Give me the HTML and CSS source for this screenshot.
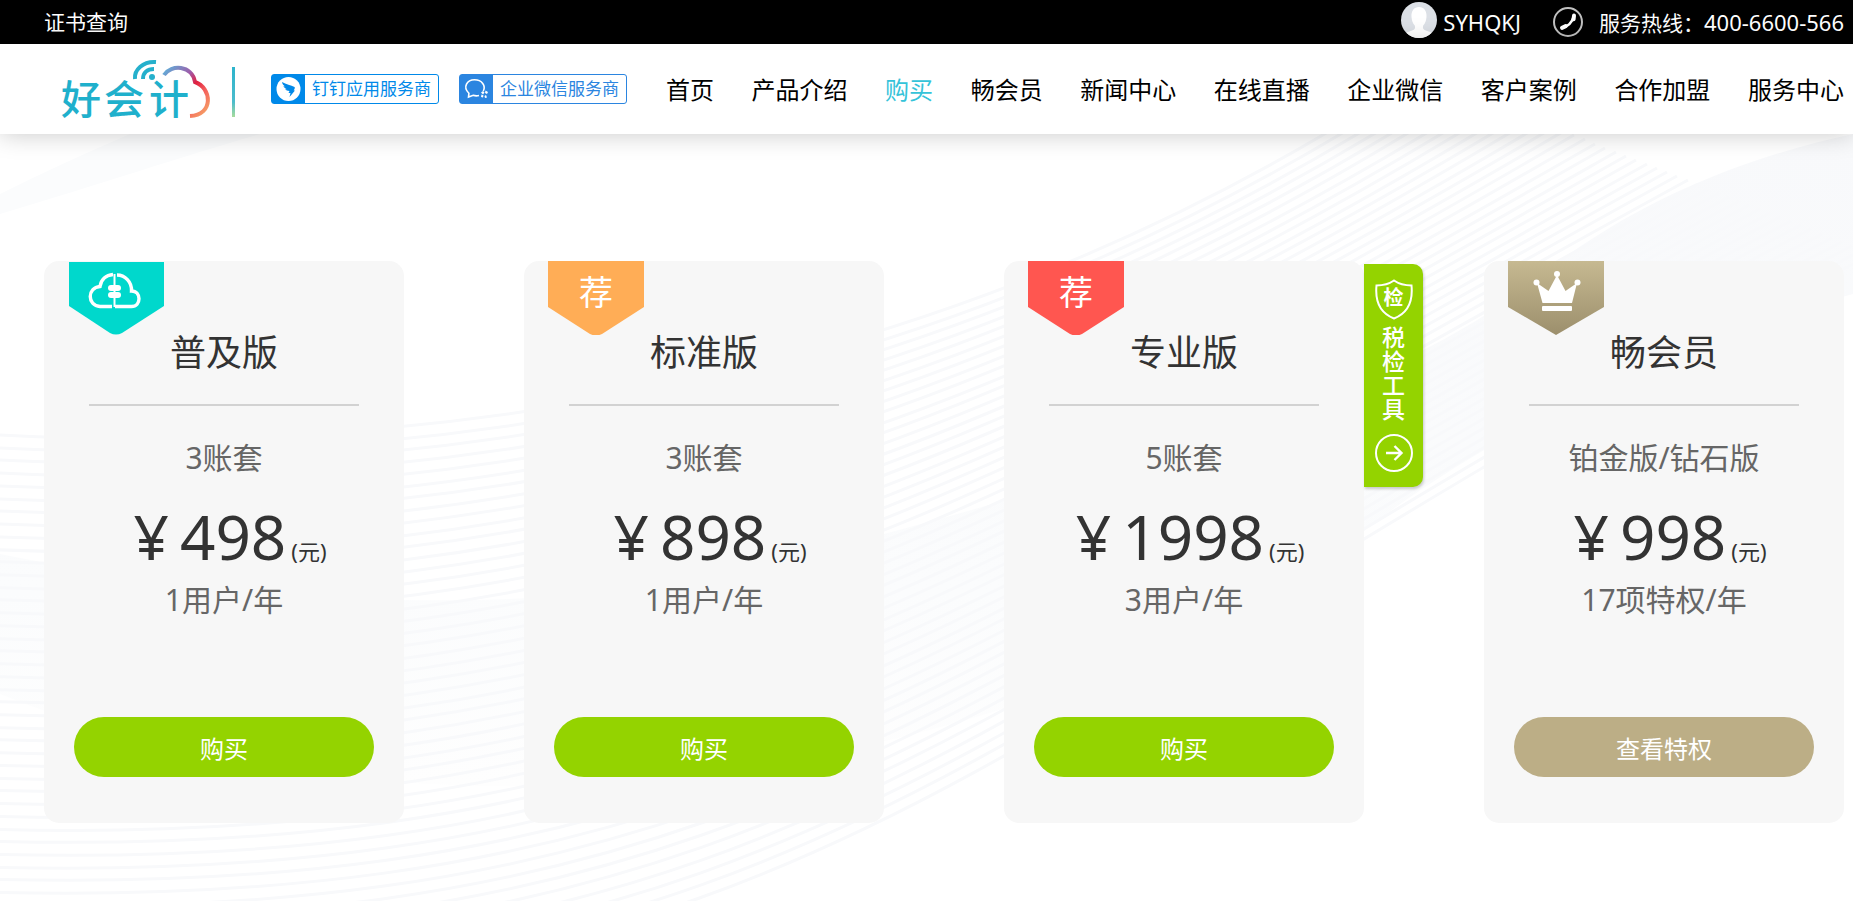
FILE: index.html
```html
<!DOCTYPE html>
<html lang="zh-CN">
<head>
<meta charset="utf-8">
<title>好会计</title>
<link rel="stylesheet" href="styles.css">
</head>
<body>
<div class="topbar">
  <a class="topbar-link" href="#">证书查询</a>
  <div class="topbar-right">
    <a class="user" href="#">
      <svg class="avatar" viewBox="0 0 36 36" aria-hidden="true">
        <defs><clipPath id="round"><circle cx="18" cy="18" r="18"/></clipPath></defs>
        <g clip-path="url(#round)">
          <rect width="36" height="36" fill="#dce0e6"/>
          <path fill="#fff" d="M18 5c5 0 8 4 7.500 10-.3 4-1.500 6.500-3.300 8.500-.9 3 .3 4.500 3.300 5.300 3 .8 5 1.700 6.500 3.200V36H4v-4c1.500-1.500 3.500-2.400 6.500-3.200s4.200-2.300 3.300-5.300c-1.800-2-3-4.500-3.300-8.500C10 9 13 5 18 5z"/>
        </g>
      </svg>
      <span class="latin">SYHQKJ</span>
    </a>
    <div class="hotline">
      <svg class="phone" viewBox="0 0 30 30" fill="none" stroke="#fff" aria-hidden="true">
        <circle cx="15" cy="15" r="14" stroke="#c0c0c0" stroke-width="2"/>
        <path d="M9.500 20.500c5-.6 9.600-4.800 11.200-10.800" stroke-width="2.600"/>
        <path d="M9 20.800l3.600-1.600M20.600 12.200l.4-3.600" stroke-width="4" stroke-linecap="round"/>
      </svg>
      <span>服务热线：<span class="latin">400-6600-566</span></span>
    </div>
  </div>
</div>

<header class="header">
  <a class="logo" href="#">
    <svg viewBox="0 -8 176 76" role="img" aria-label="好会计">
      <defs>
        <linearGradient id="cloud" x1="0" y1="0" x2="1" y2="1">
          <stop offset="0" stop-color="#5cb4dc"/><stop offset=".35" stop-color="#a05aa8"/>
          <stop offset=".52" stop-color="#e02040"/><stop offset=".7" stop-color="#f4605c"/><stop offset="1" stop-color="#f6ac68"/>
        </linearGradient>
        <linearGradient id="rule" x1="0" y1="0" x2="0" y2="1">
          <stop offset="0" stop-color="#2cb4cc"/><stop offset=".7" stop-color="#4cbccc"/><stop offset="1" stop-color="#a8dc9c"/>
        </linearGradient>
      </defs>
      <g class="logo-text">
        <text x="0" y="55">好</text><text x="43" y="55">会</text><text x="88" y="55">计</text>
      </g>
      <g fill="none" stroke="#25b0cc" stroke-width="4">
        <path d="M74 20C73 11 82 2 95 3"/><path d="M82 20c0-6 4-10 11-10"/>
      </g>
      <circle cx="91" cy="18" r="3" fill="#25b0cc"/>
      <path d="M103 16c7-11 28-10 31 7 17 6 19 33-5 34" fill="none" stroke="url(#cloud)" stroke-width="4"/>
      <rect x="171" y="8" width="3" height="50" fill="url(#rule)"/>
    </svg>
  </a>
  <div class="partners">
    <a class="partner" href="#">
      <svg viewBox="0 0 32 28" aria-hidden="true"><circle cx="16" cy="14" r="12" fill="#fff"/><path fill="#0089e9" d="M9.500 7c4 2.500 9 3 12.500 5 .8.600 0 2.200-.8 3.500h1.300L17 22l1-4h-2l1-2c-2 0-3.700-.8-4.300-2l2.300.3c-2.400-.8-3.800-2-4-3.300l2 .5C11 10.500 9.800 9 9.500 7z"/></svg>
      <span>钉钉应用服务商</span>
    </a>
    <a class="partner partner-wecom" href="#">
      <svg viewBox="0 0 32 28" fill="none" stroke="#fff" stroke-width="1.600" aria-hidden="true"><path d="M18.500 20.500c-2 .5-4 .4-5.800-.2L8 22l.4-3.700C2 12 6.500 4.800 14 4.800c7.500 0 11.500 6 8.800 11.200"/><path fill="#fff" stroke="none" d="M20.500 17.500l2-1.500 1.500 1.500-1.500 2zM25 15.500l2.500 1.500-1 2-2-1zM24 21l1.500-1 1 2.500-2 .5zM21 19.500l2 1-.5 2-2-.5z"/></svg>
      <span>企业微信服务商</span>
    </a>
  </div>
  <nav class="nav">
    <a href="#">首页</a>
    <a href="#">产品介绍</a>
    <a class="active" href="#">购买</a>
    <a href="#">畅会员</a>
    <a href="#">新闻中心</a>
    <a href="#">在线直播</a>
    <a href="#">企业微信</a>
    <a href="#">客户案例</a>
    <a href="#">合作加盟</a>
    <a href="#">服务中心</a>
  </nav>
</header>

<main class="plans-area">
  <svg class="waves" viewBox="0 0 1853 767" preserveAspectRatio="none" aria-hidden="true">
    <defs>
      <linearGradient id="band" x1="0" y1="0" x2="0" y2="1">
        <stop offset="0" stop-color="#f8f9fb"/><stop offset=".7" stop-color="#fbfcfd"/><stop offset="1" stop-color="#fefefe"/>
      </linearGradient>
    </defs>
    <path fill="url(#band)" d="M0 420C300 480 620 490 884 400C1180 320 1400 250 1530 150C1640 60 1760 20 1853 0V160C1700 200 1500 290 1360 400C1100 600 500 760 0 560Z"/>
    <path fill="#fbfcfd" d="M0 80C100 50 190 20 260 0H130Q60 30 0 60Z"/>
    <g id="lines" class="wave-lines"></g>
  </svg>

  <div class="plans">
    <section class="plan">
      <div class="ribbon">
        <svg viewBox="0 0 96 74" aria-hidden="true">
          <path fill="#00d8cc" d="M1 1h95v44L54 72q-6 3-12 0L1 45z"/>
          <g fill="none" stroke="#fff" stroke-width="3.400">
            <path d="M44 45.500H32c-13-1-13-19 0-20 1-7 6-11.500 13-12"/>
            <path d="M49 14c8 0 15 7 14.500 16 10 0 10 15.500 0 15.500H47"/>
            <path d="M46.500 13v33" stroke-width="2"/>
          </g>
          <rect x="40" y="24" width="13" height="6" rx="3" fill="#fff"/><rect x="40" y="31" width="13" height="6" rx="3" fill="#fff"/>
        </svg>
      </div>
      <h2>普及版</h2>
      <p class="spec">3账套</p>
      <p class="price"><span>¥</span><span class="amount">498</span><small>(元)</small></p>
      <p class="term">1用户/年</p>
      <button class="buy" type="button">购买</button>
    </section>

    <section class="plan">
      <div class="ribbon">
        <svg viewBox="0 0 96 74" aria-hidden="true"><path fill="#ffad56" d="M0 0h96v46L54 73q-6 3-12 0L0 46z"/></svg>
        <span class="ribbon-text">荐</span>
      </div>
      <h2>标准版</h2>
      <p class="spec">3账套</p>
      <p class="price"><span>¥</span><span class="amount">898</span><small>(元)</small></p>
      <p class="term">1用户/年</p>
      <button class="buy" type="button">购买</button>
    </section>

    <section class="plan">
      <div class="ribbon">
        <svg viewBox="0 0 96 74" aria-hidden="true"><path fill="#ff5650" d="M0 0h96v46L54 73q-6 3-12 0L0 46z"/></svg>
        <span class="ribbon-text">荐</span>
      </div>
      <h2>专业版</h2>
      <p class="spec">5账套</p>
      <p class="price"><span>¥</span><span class="amount">1998</span><small>(元)</small></p>
      <p class="term">3用户/年</p>
      <button class="buy" type="button">购买</button>
      <a class="tax-tool" href="#">
        <span class="shield">
          <svg viewBox="0 0 38 41" fill="none" stroke="#fff" stroke-width="2" aria-hidden="true"><path d="M19 1.500C14 5 8 6.500 1.500 6.500 0 22 5 34 19 39.500 33 34 38 22 36.500 6.500 30 6.500 24 5 19 1.500z"/></svg>
          <span class="shield-text">检</span>
        </span>
        <span class="tax-label">税检工具</span>
        <svg class="go" viewBox="0 0 38 38" fill="none" stroke="#fff" stroke-width="2" aria-hidden="true"><circle cx="19" cy="19" r="18"/><path d="M11 19h15M19.500 12l7 7-7 7" stroke-width="2.400"/></svg>
      </a>
    </section>

    <section class="plan">
      <div class="ribbon">
        <svg viewBox="0 0 96 74" aria-hidden="true">
          <defs><linearGradient id="gold" x1="0" y1="0" x2="0" y2="1"><stop offset="0" stop-color="#c6b991"/><stop offset="1" stop-color="#9c8f6c"/></linearGradient></defs>
          <path fill="url(#gold)" d="M0 0h96v46L48 74 0 46z"/>
          <g fill="#fff">
            <path d="M34.500 42L29 22l11.500 8L49 14l8.500 16L69 22l-5 20z"/>
            <circle cx="28.500" cy="21.500" r="3"/><circle cx="49" cy="13" r="3"/><circle cx="69.500" cy="21.500" r="3"/>
            <rect x="34" y="45" width="30" height="5" rx="1"/>
          </g>
        </svg>
      </div>
      <h2>畅会员</h2>
      <p class="spec">铂金版/钻石版</p>
      <p class="price"><span>¥</span><span class="amount">998</span><small>(元)</small></p>
      <p class="term">17项特权/年</p>
      <button class="buy buy-gold" type="button">查看特权</button>
    </section>
  </div>
</main>
<script src="waves.js"></script>
</body>
</html>
```
FILE: styles.css
```css
* {
  box-sizing: border-box;
}

body {
  margin: 0;
  min-height: 100vh;
  display: flex;
  flex-direction: column;
  overflow-x: hidden;
  background: #fff;
  color: #333;
  font-family: "Noto Sans", "Noto Sans CJK SC", sans-serif;
}

a {
  color: inherit;
  text-decoration: none;
}

.topbar {
  display: flex;
  align-items: center;
  justify-content: space-between;
  height: 44px;
  padding: 0 9px 0 44px;
  background: #000;
  color: #fff;
  font-size: 21px;
  line-height: 30px;
}

.topbar-right,
.user,
.hotline {
  display: flex;
  align-items: center;
}

.topbar-right {
  gap: 32px;
}

.user {
  gap: 6px;
}

.hotline {
  gap: 16px;
}

.latin {
  font-size: 22px;
}

.avatar {
  width: 36px;
  height: 36px;
  margin-bottom: 4px;
}

.phone {
  width: 30px;
  height: 30px;
}

.header {
  position: relative;
  z-index: 1;
  display: flex;
  align-items: center;
  height: 90px;
  padding: 0 9px 0 61px;
  background: #fff;
  box-shadow: 0 0 24px rgba(0, 0, 0, 0.22);
}

.logo svg {
  display: block;
  width: 176px;
  height: 76px;
}

.logo-text {
  fill: #1fb0cc;
  font-family: "Noto Sans CJK SC", sans-serif;
  font-size: 40px;
  font-weight: 500;
}

.partners {
  display: flex;
  gap: 20px;
  margin-left: 34px;
}

.partner {
  display: flex;
  align-items: center;
  width: 168px;
  height: 30px;
  border: 1px solid #0089e9;
  border-radius: 3px;
  color: #0089e9;
  font-size: 17px;
  line-height: 28px;
}

.partner svg {
  flex: none;
  width: 33px;
  height: 28px;
  background: #0089e9;
}

.partner span {
  flex: 1;
  text-align: center;
  white-space: nowrap;
}

.partner-wecom {
  border-color: #2b85e0;
  color: #2b85e0;
}

.partner-wecom svg {
  background: #2b85e0;
}

.nav {
  flex: 1;
  display: flex;
  justify-content: space-between;
  margin-left: 39px;
  padding-top: 2px;
  color: #000;
  font-size: 24px;
  line-height: 36px;
  white-space: nowrap;
}

.nav .active {
  color: #35c3d9;
}

.plans-area {
  position: relative;
  flex: 1;
  padding: 127px 9px 78px 44px;
}

.waves {
  position: absolute;
  inset: 0;
  width: 100%;
  height: 100%;
}

.wave-lines {
  fill: none;
  stroke: #f8f9fb;
  stroke-width: 3;
}

.plans {
  position: relative;
  display: grid;
  grid-template-columns: repeat(4, 1fr);
  gap: 120px;
}

.plan {
  position: relative;
  display: flex;
  flex-direction: column;
  padding: 70px 30px 46px;
  border-radius: 15px;
  background: #f7f7f7;
  text-align: center;
}

.plan h2,
.plan p {
  margin: 0;
  white-space: nowrap;
}

.plan h2 {
  margin: 0 15px 32px;
  padding-bottom: 29px;
  border-bottom: 2px solid #d2d2d2;
  font-size: 36px;
  font-weight: 400;
  line-height: 44px;
}

.plan .spec,
.plan .term {
  color: #666;
  font-size: 30px;
  line-height: 40px;
}

.plan .price {
  display: flex;
  align-items: baseline;
  justify-content: center;
  height: 80px;
  margin: 18px 0 4px;
  padding-left: 12px;
  font-size: 62px;
  line-height: 80px;
}

.price .amount {
  margin: 0 5px 0 11px;
}

.price small {
  font-size: 22px;
  line-height: 30px;
}

.buy {
  height: 60px;
  margin-top: 97px;
  border: 0;
  border-radius: 30px;
  background: #94d300;
  color: #fff;
  font: inherit;
  font-size: 24px;
}

.buy-gold {
  background: #bcae86;
}

.ribbon {
  position: absolute;
  top: 0;
  left: 24px;
  width: 96px;
  height: 74px;
}

.ribbon svg {
  display: block;
  width: 100%;
  height: 100%;
}

.ribbon-text {
  position: absolute;
  inset: 0 0 12px;
  color: #fff;
  font-size: 34px;
  line-height: 62px;
}

.tax-tool {
  position: absolute;
  top: 3px;
  left: 100%;
  display: flex;
  flex-direction: column;
  align-items: center;
  width: 59px;
  padding: 15px 0;
  border-radius: 0 10px 10px 0;
  background: #94d300;
  box-shadow: 1px 2px 3px rgba(0, 0, 0, 0.2);
  color: #fff;
}

.shield {
  position: relative;
  width: 38px;
  height: 41px;
}

.shield svg {
  display: block;
  width: 100%;
  height: 100%;
}

.shield-text {
  position: absolute;
  inset: 0;
  font-size: 20px;
  font-weight: 700;
  line-height: 38px;
  text-align: center;
}

.tax-label {
  width: 24px;
  margin: 5px 0 13px;
  font-size: 23px;
  font-weight: 500;
  line-height: 24px;
  word-break: break-all;
}

.go {
  width: 38px;
  height: 38px;
}
```
FILE: waves.js
```javascript
// Fine lines of the background, blended between an upper and a lower curve.
(function () {
  var upper = [-20, 300, 500, 330, 1000, 220, 1420, -60];
  var lower = [-20, 860, 860, 880, 1000, 560, 1873, 120];
  var group = document.getElementById("lines");
  var count = 44;
  for (var i = 0; i <= count; i++) {
    var t = i / count;
    var p = upper.map(function (v, k) {
      return Math.round(v + (lower[k] - v) * t);
    });
    var path = document.createElementNS("http://www.w3.org/2000/svg", "path");
    path.setAttribute("d", "M" + p[0] + " " + p[1] + "C" + p.slice(2).join(" "));
    group.appendChild(path);
  }
})();
```
